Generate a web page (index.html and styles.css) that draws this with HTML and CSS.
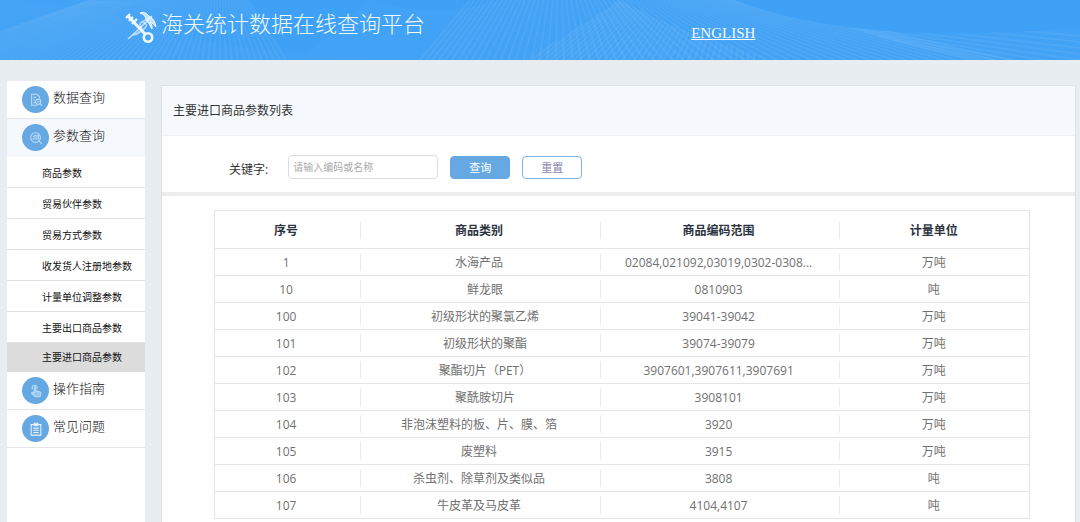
FILE: index.html
```
<!DOCTYPE html>
<html lang="zh-CN">
<head>
  <meta charset="UTF-8">
  <meta name="viewport" content="width=device-width, initial-scale=1.0">
  <title>海关统计数据在线查询平台</title>
  <link rel="stylesheet" href="styles.css">
</head>
<body>

<header class="header">
  <svg class="header-waves" viewBox="0 0 1080 60" preserveAspectRatio="none" aria-hidden="true">
    <defs>
      <clipPath id="hillClip"><path d="M525 60 Q590 20 620 0 Q680 35 780 60Z"/></clipPath>
      <clipPath id="valleyClip"><path d="M0 0H735Q860 48 1080 27V60H0Z"/></clipPath>
    </defs>
    <path class="glow" d="M0 27Q50 22 90 0H0Z"/>
    <path class="glow" d="M0 0Q100 5 190 38Q280 55 400 60H0Z"/>
    <path class="glow" d="M370 0Q440 20 500 0H735Q860 48 1080 27V60H300Z"/>
    <path class="glow" d="M525 60Q590 20 620 0Q680 35 780 60Z"/>
    <g id="fanLeft"></g>
    <g id="fanMiddle" clip-path="url(#valleyClip)"></g>
    <g id="fanHill" clip-path="url(#hillClip)"></g>
    <g id="fanRight" clip-path="url(#valleyClip)"></g>
  </svg>
  <div class="brand">
    <svg class="logo" viewBox="0 0 32 32" fill="none" stroke="#f0f9ff" aria-hidden="true">
      <path d="M3 5L20 23" stroke-width="3"/>
      <path d="M1 7L5 3M4 10L8 6M7 13L12 8" stroke-width="2.4"/>
      <circle cx="23" cy="26.500" r="4.2" stroke-width="2.6"/>
      <path d="M27 5L14 18L3 28" stroke-width="1.6" opacity=".7"/>
      <path d="M17 11Q24 13 20 17T12 22M21 9Q13 11 16 16T8 24" stroke-width="1.8" opacity=".6"/>
      <path d="M15 2Q20 0 24 5Q30 8 31 16Q28 12 25 11Q28 15 27 18Q24 12 21 9Q21 4 15 2Z" fill="#fff" fill-opacity=".7" stroke-width="1"/>
    </svg>
    <h1 class="brand-title">海关统计数据在线查询平台</h1>
  </div>
  <a class="lang" href="#">ENGLISH</a>
</header>

<div class="layout">
  <nav class="sidebar">
    <a class="menu" href="#">
      <span class="menu-icon">
        <svg viewBox="0 0 16 16"><path d="M12 6V4L9 1.500H3V14H9M5 5H8M5 8H7M5 11H7"/><circle cx="10.500" cy="10" r="3"/><path d="M12.500 12L15 14.500M9 10H12"/></svg>
      </span>
      数据查询
    </a>
    <a class="menu menu-open" href="#">
      <span class="menu-icon">
        <svg viewBox="0 0 16 16"><circle cx="7.500" cy="7.500" r="5.500"/><path d="M11.500 11.500L15 15M5 10V8M7 10V6.500M9 10V7M10.800 10V5M4.500 7L7 5L9 6L11 4"/></svg>
      </span>
      参数查询
    </a>
    <ul class="submenu">
      <li><a href="#">商品参数</a></li>
      <li><a href="#">贸易伙伴参数</a></li>
      <li><a href="#">贸易方式参数</a></li>
      <li><a href="#">收发货人注册地参数</a></li>
      <li><a href="#">计量单位调整参数</a></li>
      <li><a href="#">主要出口商品参数</a></li>
      <li><a class="active" href="#">主要进口商品参数</a></li>
    </ul>
    <a class="menu" href="#">
      <span class="menu-icon">
        <svg viewBox="0 0 16 16"><path fill="#b9dcf8" fill-opacity=".6" d="M6 9V4Q7 2.500 8 4V8L12.500 9Q14 9.500 13.500 11L12.500 14.500H7L3 10.500Q3 9 4.500 9.500L6 10.500Z"/><path d="M4 6A3 3 0 1 1 9.500 5"/></svg>
      </span>
      操作指南
    </a>
    <a class="menu" href="#">
      <span class="menu-icon icon-light">
        <svg viewBox="0 0 16 16"><path d="M2.500 3H13.500V15H2.500ZM6 1.500H10V4H6ZM5 7H11M5 9.500H11M5 12H11"/></svg>
      </span>
      常见问题
    </a>
  </nav>

  <main class="panel">
    <h2 class="panel-title">主要进口商品参数列表</h2>
    <form class="search">
      <label for="keyword">关键字:</label>
      <input type="text" id="keyword" placeholder="请输入编码或名称">
      <button type="button" class="btn btn-primary">查询</button>
      <button type="reset" class="btn">重置</button>
    </form>
    <div class="table-wrap">
      <table class="params">
        <colgroup>
          <col class="col-no">
          <col class="col-name">
          <col class="col-code">
          <col>
        </colgroup>
        <thead>
          <tr><th>序号</th><th>商品类别</th><th>商品编码范围</th><th>计量单位</th></tr>
        </thead>
        <tbody>
          <tr><td>1</td><td>水海产品</td><td>02084,021092,03019,0302-0308...</td><td>万吨</td></tr>
          <tr><td>10</td><td>&emsp;鲜龙眼</td><td>0810903</td><td>吨</td></tr>
          <tr><td>100</td><td>&emsp;初级形状的聚氯乙烯</td><td>39041-39042</td><td>万吨</td></tr>
          <tr><td>101</td><td>&emsp;初级形状的聚酯</td><td>39074-39079</td><td>万吨</td></tr>
          <tr><td>102</td><td>&emsp;聚酯切片（PET）</td><td>3907601,3907611,3907691</td><td>万吨</td></tr>
          <tr><td>103</td><td>&emsp;聚酰胺切片</td><td>3908101</td><td>万吨</td></tr>
          <tr><td>104</td><td>非泡沫塑料的板、片、膜、箔</td><td>3920</td><td>万吨</td></tr>
          <tr><td>105</td><td>废塑料</td><td>3915</td><td>万吨</td></tr>
          <tr><td>106</td><td>杀虫剂、除草剂及类似品</td><td>3808</td><td>吨</td></tr>
          <tr><td>107</td><td>牛皮革及马皮革</td><td>4104,4107</td><td>吨</td></tr>
        </tbody>
      </table>
    </div>
  </main>
</div>

<script src="header.js"></script>
</body>
</html>
```

FILE: styles.css
```
* {
  box-sizing: border-box;
}
body {
  margin: 0;
  min-height: 100vh;
  display: flex;
  flex-direction: column;
  background-color: #e8edf1;
  font-family: "Open Sans", "Noto Sans CJK SC", sans-serif;
  font-size: 12px;
  color: #333;
}
a {
  color: inherit;
  text-decoration: none;
}

/* header */
.header {
  position: relative;
  display: flex;
  height: 60px;
  background-color: #3fa1f5;
  color: #f0f9ff;
}
.header-waves {
  position: absolute;
  inset: 0;
  width: 100%;
  height: 100%;
}
.header-waves .glow {
  fill: #fff;
  fill-opacity: 0.02;
}
.header-waves line {
  stroke: #fff;
  stroke-opacity: 0.06;
  stroke-width: 2;
}
.brand {
  position: relative;
  display: flex;
  align-items: flex-start;
  gap: 4px;
  width: 64%;
  padding: 11px 0 0 125px;
}
.logo {
  width: 32px;
  height: 32px;
}
.brand-title {
  margin: 0;
  font-size: 22px;
  font-weight: 300;
  line-height: 24px;
}
.lang {
  position: relative;
  align-self: flex-start;
  margin-top: 24px;
  font-family: "Liberation Serif", serif;
  font-size: 15px;
  line-height: 18px;
  text-decoration: underline;
}

.layout {
  flex: 1;
  display: flex;
  gap: 16px;
  padding: 0 4px 0 7px;
}

/* left menu */
.sidebar {
  flex: none;
  width: 138px;
  margin-top: 21px;
  background-color: #fff;
}
.menu {
  display: flex;
  gap: 4px;
  height: 38px;
  padding: 5px 0 0 15px;
  border-bottom: 1px solid #e3e6e8;
  font-size: 13px;
  font-weight: 300;
  line-height: 22px;
  color: #111;
}
.menu-open {
  background-color: #f5f9fd;
  border-bottom: 0;
}
.menu-icon {
  display: flex;
  align-items: center;
  justify-content: center;
  width: 27px;
  height: 27px;
  border-radius: 50%;
  background-color: #66a8e2;
}
.menu-icon svg {
  width: 14px;
  height: 14px;
  fill: none;
  stroke: #b9dcf8;
  stroke-width: 1.2;
}
.icon-light svg {
  stroke: #e6f4ff;
}
.submenu {
  margin: 0;
  padding: 0;
  list-style: none;
}
.submenu a {
  display: block;
  height: 31px;
  padding-left: 35px;
  border-bottom: 1px solid #e0e0e0;
  font-size: 10px;
  line-height: 32px;
  color: #111;
}
.submenu .active {
  height: 29px;
  border-bottom: 0;
  background-color: #dcdcdc;
  line-height: 29px;
}

/* content */
.panel {
  flex: 1;
  margin-top: 25px;
  border: 1px solid #dde2e5;
  border-bottom: 0;
  background-color: #fff;
}
.panel-title {
  margin: 0;
  padding-left: 11px;
  background-color: #f5f9fd;
  font-size: 12px;
  font-weight: 400;
  line-height: 49px;
}
.search {
  display: flex;
  align-items: center;
  gap: 12px;
  height: 61px;
  padding: 6px 0 0 67px;
  border-bottom: 4px solid #ededed;
  border-top: 1px solid #eff2f4;
}
.search label {
  margin-right: 8px;
  padding-top: 4px;
}
.search input {
  width: 150px;
  height: 24px;
  padding: 0 4px;
  border: 1px solid #ddd;
  border-radius: 4px;
  font-family: inherit;
  font-size: 10px;
}
.search input::placeholder {
  color: #aaa;
}
.btn {
  width: 60px;
  height: 23px;
  padding: 0;
  border: 1px solid #7fb2e4;
  border-radius: 4px;
  background-color: #fff;
  font-family: inherit;
  font-size: 11px;
  color: #8888b0;
}
.btn-primary {
  border-color: #66a8e2;
  background-color: #66a8e2;
  color: #fff;
}

.table-wrap {
  padding: 14px 45px 0 52px;
}
.params {
  width: 100%;
  table-layout: fixed;
  border-collapse: collapse;
  border: 1px solid #e4e4e4;
  text-align: center;
}
.col-no {
  width: 18%;
}
.col-name,
.col-code {
  width: 29.4%;
}
.params tr {
  height: 27px;
  border-bottom: 1px solid #e4e4e4;
}
.params thead tr {
  height: 38px;
}
.params th,
.params td {
  padding: 1px 4px 0 0;
  background: linear-gradient(#ebebeb, #ebebeb) no-repeat right center / 1px 18px;
  line-height: 18px;
}
.params th {
  padding-top: 3px;
  color: #2b3340;
}
.params td {
  color: #707070;
}
.params th:last-child,
.params td:last-child {
  padding-right: 2px;
  background: none;
}
```

FILE: header.js
```
// Draws the fans of thin lines behind the header
function drawFan(id, count, getLine) {
  const group = document.getElementById(id);
  for (let i = 0; i < count; i++) {
    const [x1, y1, x2, y2] = getLine(i);
    const line = document.createElementNS("http://www.w3.org/2000/svg", "line");
    line.setAttribute("x1", x1);
    line.setAttribute("y1", y1);
    line.setAttribute("x2", x2);
    line.setAttribute("y2", y2);
    group.appendChild(line);
  }
}

drawFan("fanLeft", 62, i => [90 + i * 2.6, 0, -80 + i * 6, 60]);
drawFan("fanMiddle", 62, i => [470 + i * 4.6, 0, 420 + i * 6 + i * i * 0.06, 60]);
drawFan("fanHill", 40, i => [600 + i * 4, 0, 520 + i * 6, 60]);
drawFan("fanRight", 9, i => [780 + i * 14, 8 + i * 4, 1080, 36 + i * 6]);
```
